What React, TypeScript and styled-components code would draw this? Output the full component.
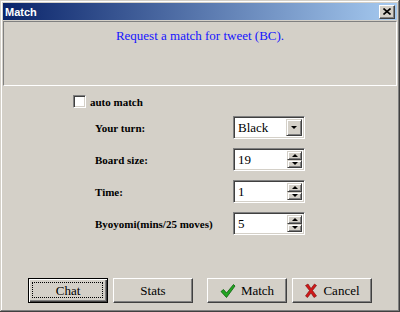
import React from "react";
import styled, { createGlobalStyle } from "styled-components";

const GlobalStyle = createGlobalStyle`
  html, body {
    margin: 0;
    padding: 0;
    background: #d4d0c8;
  }
  #root {
    width: 400px;
    height: 312px;
  }
`;

const Window = styled.div`
  box-sizing: border-box;
  width: 400px;
  height: 312px;
  padding: 3px;
  background: #d4d0c8;
  display: flex;
  flex-direction: column;
  box-shadow: inset -1px -1px #404040, inset 1px 1px #d4d0c8,
    inset -2px -2px #808080, inset 2px 2px #ffffff;
`;

const TitleBar = styled.div`
  height: 17px;
  margin-bottom: 1px;
  padding: 0 2px 0 2px;
  display: flex;
  align-items: center;
  justify-content: space-between;
  background: linear-gradient(to right, #0a246a, #a6caf0);
  color: #ffffff;
  font: bold 11px "Liberation Sans", Arial, sans-serif;
`;

const CloseButton = styled.div`
  box-sizing: border-box;
  width: 16px;
  height: 14px;
  background: #d4d0c8;
  border: 1px solid;
  border-color: #ffffff #404040 #404040 #ffffff;
  box-shadow: inset -1px -1px #808080;
  display: flex;
  align-items: center;
  justify-content: center;
`;

const MessagePanel = styled.div`
  box-sizing: border-box;
  height: 65px;
  padding-top: 6px;
  border: 1px solid;
  border-color: #808080 #ffffff #ffffff #808080;
  text-align: center;
  color: #1414ff;
  font: 13px "Liberation Serif", "Times New Roman", serif;
`;

const Body = styled.div`
  padding: 9px 0 0 70px;
  font: bold 11px "Liberation Serif", "Times New Roman", serif;
  color: #000000;
`;

const CheckRow = styled.label`
  display: flex;
  align-items: center;
  gap: 4px;
  height: 13px;
`;

const CheckBox = styled.span`
  box-sizing: border-box;
  width: 13px;
  height: 13px;
  background: #ffffff;
  border: 1px solid;
  border-color: #808080 #ffffff #ffffff #808080;
  box-shadow: inset 1px 1px #404040, inset -1px -1px #d4d0c8;
`;

const FieldGrid = styled.div`
  display: grid;
  grid-template-columns: 138px 72px;
  grid-auto-rows: 23px;
  row-gap: 9px;
  margin: 8px 0 0 22px;
  align-items: center;
`;

const Sunken = styled.div`
  box-sizing: border-box;
  height: 23px;
  background: #ffffff;
  border: 1px solid;
  border-color: #808080 #ffffff #ffffff #808080;
  box-shadow: inset 1px 1px #404040, inset -1px -1px #d4d0c8;
  display: flex;
  align-items: center;
  padding: 2px 2px 2px 4px;
  font: 13px "Liberation Serif", "Times New Roman", serif;
  font-weight: normal;
`;

const Value = styled.span`
  flex: 1;
`;

const DropButton = styled.div`
  box-sizing: border-box;
  width: 16px;
  height: 17px;
  background: #d4d0c8;
  border: 1px solid;
  border-color: #d4d0c8 #404040 #404040 #d4d0c8;
  box-shadow: inset 1px 1px #ffffff, inset -1px -1px #808080;
  display: flex;
  align-items: center;
  justify-content: center;
`;

const SpinStack = styled.div`
  display: flex;
  flex-direction: column;
  height: 17px;
`;

const SpinButton = styled.div`
  box-sizing: border-box;
  width: 15px;
  height: 8.5px;
  background: #d4d0c8;
  border: 1px solid;
  border-color: #d4d0c8 #404040 #404040 #d4d0c8;
  box-shadow: inset 1px 1px #ffffff, inset -1px -1px #808080;
  display: flex;
  align-items: center;
  justify-content: center;
`;

const Arrow = styled.span<{ $up?: boolean }>`
  width: 0;
  height: 0;
  border-left: 3px solid transparent;
  border-right: 3px solid transparent;
  ${(p) =>
    p.$up ? "border-bottom: 3px solid #000;" : "border-top: 3px solid #000;"}
`;

const ButtonBar = styled.div`
  margin-top: auto;
  padding: 0 0 6px 25px;
  display: flex;
`;

const Button = styled.button<{ $default?: boolean; $gap?: number }>`
  box-sizing: border-box;
  width: 80px;
  height: 25px;
  margin-left: ${(p) => p.$gap ?? 0}px;
  padding: 0;
  background: #d4d0c8;
  border: 1px solid;
  border-color: ${(p) =>
    p.$default ? "#000000" : "#ffffff #404040 #404040 #ffffff"};
  box-shadow: ${(p) =>
    p.$default
      ? "inset 1px 1px #ffffff, inset -1px -1px #404040, inset -2px -2px #808080"
      : "inset -1px -1px #808080"};
  display: flex;
  align-items: center;
  justify-content: center;
  gap: 5px;
  font: 13px "Liberation Serif", "Times New Roman", serif;
  color: #000000;
  position: relative;
`;

const FocusRing = styled.span`
  position: absolute;
  inset: 3px 4px 4px 3px;
  border: 1px dotted #000000;
`;

const CheckIcon = () => (
  <svg width="16" height="16" viewBox="0 0 16 16">
    <path
      d="M1 8.5 L3.5 6.5 L6.5 10 L13.5 1.5 L15 3 L6.5 14.5 Z"
      fill="#22a622"
      stroke="#0b5f0b"
      strokeWidth="0.8"
      strokeLinejoin="round"
    />
  </svg>
);

const CrossIcon = () => (
  <svg width="14" height="15" viewBox="0 0 14 15">
    <path
      d="M1.5 2.5 L4 1 L7 5.5 L10.5 1 L12.5 2.5 L8.5 7.5 L12.5 13 L10 14.5 L7 10 L3.5 14.5 L1.5 13 L5.5 7.5 Z"
      fill="#d01818"
      stroke="#7a0a0a"
      strokeWidth="0.6"
      strokeLinejoin="round"
    />
  </svg>
);

const CloseGlyph = () => (
  <svg width="8" height="7" viewBox="0 0 8 7">
    <path d="M0.5 0.5 L7.5 6.5 M7.5 0.5 L0.5 6.5" stroke="#000" strokeWidth="1.6" />
  </svg>
);

const Spinner = ({ value }: { value: string }) => (
  <Sunken>
    <Value>{value}</Value>
    <SpinStack>
      <SpinButton>
        <Arrow $up />
      </SpinButton>
      <SpinButton>
        <Arrow />
      </SpinButton>
    </SpinStack>
  </Sunken>
);

const App = () => {
  return (
    <>
      <GlobalStyle />
      <Window>
        <TitleBar>
          <span>Match</span>
          <CloseButton>
            <CloseGlyph />
          </CloseButton>
        </TitleBar>
        <MessagePanel>Request a match for tweet (BC).</MessagePanel>
        <Body>
          <CheckRow>
            <CheckBox />
            auto match
          </CheckRow>
          <FieldGrid>
            <span>Your turn:</span>
            <Sunken>
              <Value>Black</Value>
              <DropButton>
                <Arrow />
              </DropButton>
            </Sunken>
            <span>Board size:</span>
            <Spinner value="19" />
            <span>Time:</span>
            <Spinner value="1" />
            <span>Byoyomi(mins/25 moves)</span>
            <Spinner value="5" />
          </FieldGrid>
        </Body>
        <ButtonBar>
          <Button $default>
            <FocusRing />
            Chat
          </Button>
          <Button $gap={5}>Stats</Button>
          <Button $gap={14}>
            <CheckIcon />
            Match
          </Button>
          <Button $gap={5}>
            <CrossIcon />
            Cancel
          </Button>
        </ButtonBar>
      </Window>
    </>
  );
};

export default App;
